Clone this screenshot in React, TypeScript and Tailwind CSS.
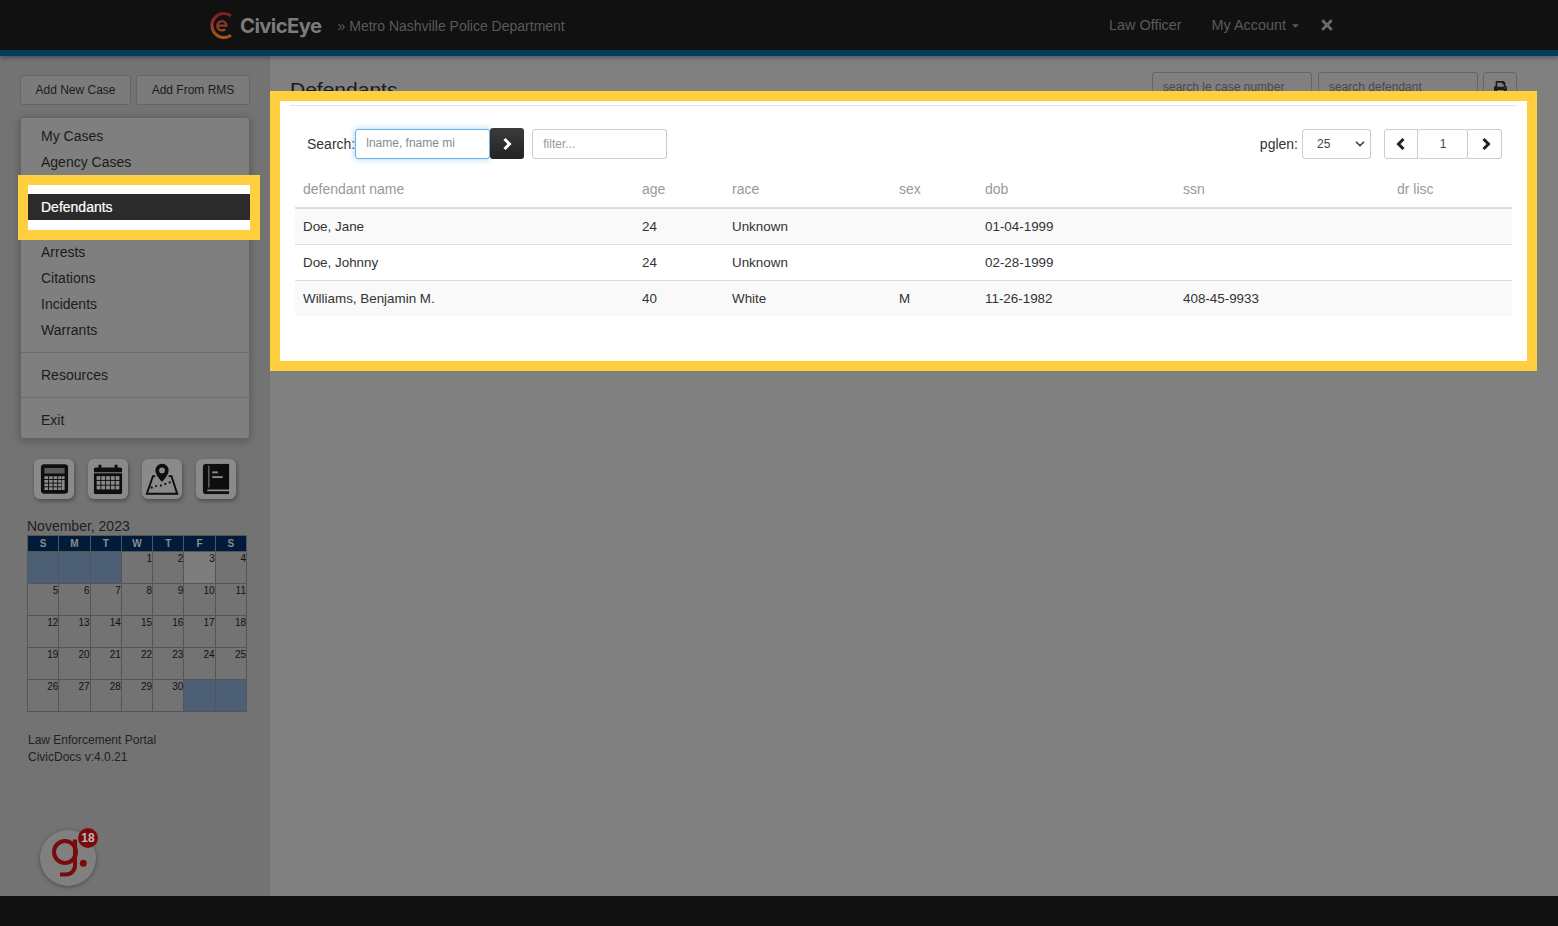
import { FaPrint, FaTimes, FaCaretDown } from "react-icons/fa";
import { ChevronDown } from "lucide-react";

const menuTop = ["My Cases", "Agency Cases"];
const menuMid = ["Arrests", "Citations", "Incidents", "Warrants"];
const days = ["S", "M", "T", "W", "T", "F", "S"];
const weeks = [
  [0, 0, 0, 1, 2, 3, 4],
  [5, 6, 7, 8, 9, 10, 11],
  [12, 13, 14, 15, 16, 17, 18],
  [19, 20, 21, 22, 23, 24, 25],
  [26, 27, 28, 29, 30, 0, 0],
];
const rows = [
  { name: "Doe, Jane", age: "24", race: "Unknown", sex: "", dob: "01-04-1999", ssn: "" },
  { name: "Doe, Johnny", age: "24", race: "Unknown", sex: "", dob: "02-28-1999", ssn: "" },
  { name: "Williams, Benjamin M.", age: "40", race: "White", sex: "M", dob: "11-26-1982", ssn: "408-45-9933" },
];

const Chev = ({ left = false }: { left?: boolean }) => (
  <svg width="10" height="12" viewBox="0 0 10 12" fill="none" stroke="currentColor" strokeWidth="3">
    <path d={left ? "M7.5 1 L2.5 6 L7.5 11" : "M2.5 1 L7.5 6 L2.5 11"} />
  </svg>
);

const CalcIcon = () => (
  <svg width="29" height="32" viewBox="0 0 30 32">
    <rect x="0" y="0" width="30" height="32" rx="4" fill="#0e0e0e" />
    <rect x="4" y="4" width="22" height="6" fill="#5a5a5a" />
    {[13, 17, 21, 25].map((y) =>
      [4, 9, 14].map((x) => <rect key={x + "-" + y} x={x} y={y} width="4" height="3" fill="#8a8a8a" />)
    )}
    <rect x="19" y="13" width="3.5" height="3" fill="#8a8a8a" />
    <rect x="23" y="13" width="3" height="3" fill="#8a8a8a" />
    <rect x="19" y="17" width="3.5" height="3" fill="#8a8a8a" />
    <rect x="19" y="21" width="3.5" height="3" fill="#8a8a8a" />
    <rect x="19" y="25" width="3.5" height="3" fill="#8a8a8a" />
    <rect x="23" y="17" width="3" height="11" fill="#8a8a8a" />
  </svg>
);

const CalendarIcon = () => (
  <svg width="30" height="32" viewBox="0 0 30 32">
    <path d="M0 6a2 2 0 0 1 2-2h3V1h3v3h14V1h3v3h3a2 2 0 0 1 2 2v3H0z" fill="#0e0e0e" />
    <path d="M0 10h30v20a2 2 0 0 1-2 2H2a2 2 0 0 1-2-2z" fill="#0e0e0e" />
    {[13, 18, 23].map((y) =>
      [3, 8, 13, 18, 23].map((x) => <rect key={x + "-" + y} x={x} y={y} width="4" height="4" fill="#8a8a8a" />)
    )}
  </svg>
);

const MapIcon = () => (
  <svg width="36" height="34" viewBox="0 0 36 34" fill="none">
    <path d="M11 14H8.5L2 32.5h32L28 14h-3" stroke="#0e0e0e" strokeWidth="2" />
    <path d="M18 1a7 7 0 0 0-7 7c0 5 7 12 7 12s7-7 7-12a7 7 0 0 0-7-7z" fill="#0e0e0e" />
    <circle cx="18" cy="8" r="3" fill="#8a8a8a" />
    <path d="M6 26c4 0 5-2 9-2s5-2 8-2 4-3 6-5" stroke="#0e0e0e" strokeWidth="2" strokeDasharray="2 3" />
  </svg>
);

const BookIcon = () => (
  <svg width="28" height="32" viewBox="0 0 28 32">
    <path d="M4 0h24v27H5a2 2 0 0 0 0 2h23v3H4a4 4 0 0 1-4-4V4a4 4 0 0 1 4-4z" fill="#0e0e0e" />
    <rect x="6" y="2" width="1" height="23" fill="#8a8a8a" />
    <rect x="10" y="8" width="6" height="2" fill="#8a8a8a" />
    <rect x="10" y="13" width="11" height="2" fill="#8a8a8a" />
  </svg>
);

const Logo = () => (
  <svg width="26" height="27" viewBox="0 0 26 27" fill="none" className="-ml-px">
    <defs>
      <linearGradient id="civic" gradientUnits="userSpaceOnUse" x1="0" y1="0" x2="0" y2="27">
        <stop offset="0" stopColor="#7d1a28" />
        <stop offset="1" stopColor="#a55a1e" />
      </linearGradient>
    </defs>
    <path d="M23 3.8A12 12 0 1 0 23 23.2" stroke="url(#civic)" strokeWidth="3" />
    <path d="M9.5 13.7h9a4.6 4.6 0 1 0-1.4 3.4" stroke="url(#civic)" strokeWidth="2.3" />
  </svg>
);

const GLogo = () => (
  <svg width="56" height="56" viewBox="0 0 56 56" fill="none">
    <circle cx="25" cy="22" r="11" stroke="#7b0a0c" strokeWidth="4" />
    <path d="M35 9.5V35.5a9 9 0 0 1-9 9h-6" stroke="#7b0a0c" strokeWidth="4" />
    <circle cx="43.3" cy="33.3" r="3.5" fill="#7b0a0c" />
  </svg>
);

const App = () => {
  return (
    <div className="relative flex flex-col w-full h-[926px] overflow-hidden bg-[#808080] font-['Liberation_Sans',Arial,sans-serif] text-[14px] text-[#1b1b1b]">
      <header className="h-[56px] shrink-0 bg-[#111111] border-b-[6px] border-[#023e5e] shadow-[0_2px_4px_rgba(0,0,0,0.3)] z-10 flex items-center pl-[209px] pr-[223px]">
        <Logo />
        <span className="ml-[6px] mt-[2px] text-[20.3px] font-bold text-[#7b7b7b] font-['Inter',sans-serif] tracking-[-0.6px]">CivicEye</span>
        <span className="ml-[16px] mt-[3px] text-[14px] text-[#5a5a5a]">» Metro Nashville Police Department</span>
        <div className="ml-auto mt-[1px] flex items-center text-[14.4px] text-[#5a5a5a]">
          <span>Law Officer</span>
          <span className="ml-[30px]">My Account</span>
          <FaCaretDown className="ml-[4px] text-[11px]" />
          <FaTimes className="ml-[18px] text-[16px] text-[#6a6a6a]" />
        </div>
      </header>

      <div className="flex flex-1 min-h-0">
        <aside className="w-[270px] shrink-0 bg-[#737373] pl-[20px] pr-[20px] pt-[19px]">
          <div className="flex gap-[5px]">
            <button className="h-[30px] w-[111px] rounded-[3px] border border-[#656565] bg-[#7b7b7b] text-[12px]">Add New Case</button>
            <button className="h-[30px] w-[114px] rounded-[3px] border border-[#656565] bg-[#7b7b7b] text-[12px]">Add From RMS</button>
          </div>
          <nav className="mt-[12px] h-[322px] rounded-[3px] border border-[#656565] bg-[#7f7f7f] shadow-[0_2px_8px_rgba(0,0,0,0.25)] pt-[5px]">
            {menuTop.map((m) => (
              <div key={m} className="h-[26px] leading-[26px] pl-[20px]">{m}</div>
            ))}
            <div className="h-[64px]" />
            {menuMid.map((m) => (
              <div key={m} className="h-[26px] leading-[26px] pl-[20px]">{m}</div>
            ))}
            <div className="my-[9px] h-px bg-[#6e6e6e]" />
            <div className="h-[26px] leading-[26px] pl-[20px]">Resources</div>
            <div className="my-[9px] h-px bg-[#6e6e6e]" />
            <div className="h-[26px] leading-[26px] pl-[20px]">Exit</div>
          </nav>
          <div className="mt-[20px] flex gap-[14px] pl-[14px]">
            {[CalcIcon, CalendarIcon, MapIcon, BookIcon].map((Icon, i) => (
              <div key={i} className="w-[40px] h-[40px] rounded-[6px] bg-[#8a8a8a] shadow-[1px_2px_4px_rgba(0,0,0,0.35)] flex items-center justify-center">
                <div className="scale-[0.95]"><Icon /></div>
              </div>
            ))}
          </div>
          <div className="mt-[19px] ml-[7px] text-[14px] leading-[17px] text-[#1f1f1f]">November, 2023</div>
          <table className="ml-[7px] w-[220px] table-fixed border-collapse">
            <thead>
              <tr>
                {days.map((d, i) => (
                  <th key={i} className="h-[16px] p-0 border border-[#555] bg-[#001c3a] text-[10px] leading-[13px] font-bold text-[#8c8c8c]">{d}</th>
                ))}
              </tr>
            </thead>
            <tbody>
              {weeks.map((w, i) => (
                <tr key={i}>
                  {w.map((d, j) => (
                    <td key={j} className={`h-[32px] p-0 align-top text-right text-[10px] leading-[13px] border border-[#555] text-[#111] ${d === 0 ? "bg-[#4d5f75]" : j === 5 && i === 0 ? "bg-[#7d7d7d]" : "bg-[#737373]"}`}>
                      {d === 0 ? "" : d}
                    </td>
                  ))}
                </tr>
              ))}
            </tbody>
          </table>
          <div className="mt-[20px] ml-[8px] text-[12px] leading-[17px] text-[#222]">
            <div>Law Enforcement Portal</div>
            <div>CivicDocs v:4.0.21</div>
          </div>
          <div className="relative mt-[64px] w-[56px] h-[56px] ml-[20px] rounded-full bg-[#808080] shadow-[0_1px_4px_rgba(0,0,0,0.35)]">
            <GLogo />
            <span className="absolute left-[38px] -top-[2px] w-[20px] h-[20px] rounded-full bg-[#7b0a0c] text-[#bbb] text-[12px] font-bold leading-[20px] text-center">18</span>
          </div>
        </aside>

        <main className="flex-1 min-w-0 pt-[16px] pl-[20px] pr-[41px]">
          <div className="flex items-start">
            <h1 className="text-[21px] leading-[36px] text-[#1b1b1b]">Defendants</h1>
            <div className="ml-auto flex gap-[6px]">
              <div className="w-[160px] h-[30px] rounded-[3px] border border-[#666] pl-[10px] text-[12px] leading-[28px] text-[#4a4a4a]">search le case number</div>
              <div className="w-[160px] h-[30px] rounded-[3px] border border-[#666] pl-[10px] text-[12px] leading-[28px] text-[#4a4a4a]">search defendant</div>
              <div className="-ml-px w-[34px] h-[30px] rounded-[3px] border border-[#666] flex items-center justify-center text-[#1b1b1b]"><FaPrint className="text-[13px]" /></div>
            </div>
          </div>
        </main>
      </div>

      <footer className="h-[30px] shrink-0 bg-[#111111]" />

      {/* highlighted menu item */}
      <div className="absolute left-[18px] top-[175px] w-[242px] h-[65px] border-[10px] border-[#ffcf40] bg-white pt-[9px]">
        <div className="w-full h-[26px] bg-[#2b2b2b] text-white text-[14px] leading-[26px] pl-[13px] [-webkit-text-stroke:0.2px_white]">Defendants</div>
      </div>

      {/* highlighted panel */}
      <div className="absolute left-[270px] top-[91px] w-[1267px] h-[280px] border-[10px] border-[#ffcf40] bg-white">
        <div className="mx-[10px] mt-[4px] h-px bg-[#e5e5e5]" />
        <div className="flex items-center pl-[27px] pr-[25px] mt-[23px]">
          <span className="text-[14px] text-[#333]">Search:</span>
          <div className="w-[135px] h-[30px] rounded-[3px] border border-[#66afe9] shadow-[0_0_6px_rgba(102,175,233,0.6)] pl-[10px] text-[12px] leading-[27px] text-[#8a8a8a]">lname, fname mi</div>
          <button className="w-[34px] h-[31px] -mt-px rounded-[3px] bg-linear-to-b from-[#3c3c3c] to-[#222222] flex items-center justify-center text-white"><Chev /></button>
          <div className="ml-[8px] w-[135px] h-[30px] rounded-[3px] border border-[#ccc] pl-[10px] text-[12px] leading-[28px] text-[#999]">filter...</div>
          <span className="ml-auto text-[14px] text-[#333]">pglen:</span>
          <div className="ml-[4px] w-[69px] h-[30px] rounded-[3px] border border-[#ccc] flex items-center pl-[14px] pr-[3px] text-[12px] text-[#444]">
            <span>25</span>
            <ChevronDown className="ml-auto w-[14px] h-[14px]" strokeWidth={3} />
          </div>
          <button className="ml-[13px] w-[34px] h-[30px] rounded-l-[3px] border border-[#ccc] flex items-center justify-center text-[#222]"><Chev left /></button>
          <div className="w-[50px] h-[30px] border-y border-r border-[#ccc] rounded-[3px] pl-px text-center text-[12px] leading-[28px] text-[#444]">1</div>
          <button className="w-[34px] h-[30px] rounded-r-[3px] border-y border-r border-[#ccc] pl-[2px] flex items-center justify-center text-[#222]"><Chev /></button>
        </div>
        <table className="ml-[15px] mt-[14px] w-[1217px] table-fixed border-collapse text-[13.4px]">
          <thead>
            <tr className="border-b-2 border-[#ddd] text-left text-[#999] text-[14px]">
              <th className="w-[339px] h-[35px] pl-[8px] pb-[2px] font-normal">defendant name</th>
              <th className="w-[90px] pl-[8px] pb-[2px] font-normal">age</th>
              <th className="w-[167px] pl-[8px] pb-[2px] font-normal">race</th>
              <th className="w-[86px] pl-[8px] pb-[2px] font-normal">sex</th>
              <th className="w-[198px] pl-[8px] pb-[2px] font-normal">dob</th>
              <th className="w-[214px] pl-[8px] pb-[2px] font-normal">ssn</th>
              <th className="pl-[8px] pb-[2px] font-normal">dr lisc</th>
            </tr>
          </thead>
          <tbody className="text-[#333]">
            {rows.map((r, i) => (
              <tr key={r.name} className={`h-[36px] border-b border-[#ddd] last:border-b-0 ${i % 2 === 0 ? "bg-[#f9f9f9]" : "bg-white"}`}>
                <td className="pl-[8px] pt-[2px]">{r.name}</td>
                <td className="pl-[8px] pt-[2px]">{r.age}</td>
                <td className="pl-[8px] pt-[2px]">{r.race}</td>
                <td className="pl-[8px] pt-[2px]">{r.sex}</td>
                <td className="pl-[8px] pt-[2px]">{r.dob}</td>
                <td className="pl-[8px] pt-[2px]">{r.ssn}</td>
                <td className="pl-[8px] pt-[2px]"></td>
              </tr>
            ))}
          </tbody>
        </table>
      </div>
    </div>
  );
};

export default App;
